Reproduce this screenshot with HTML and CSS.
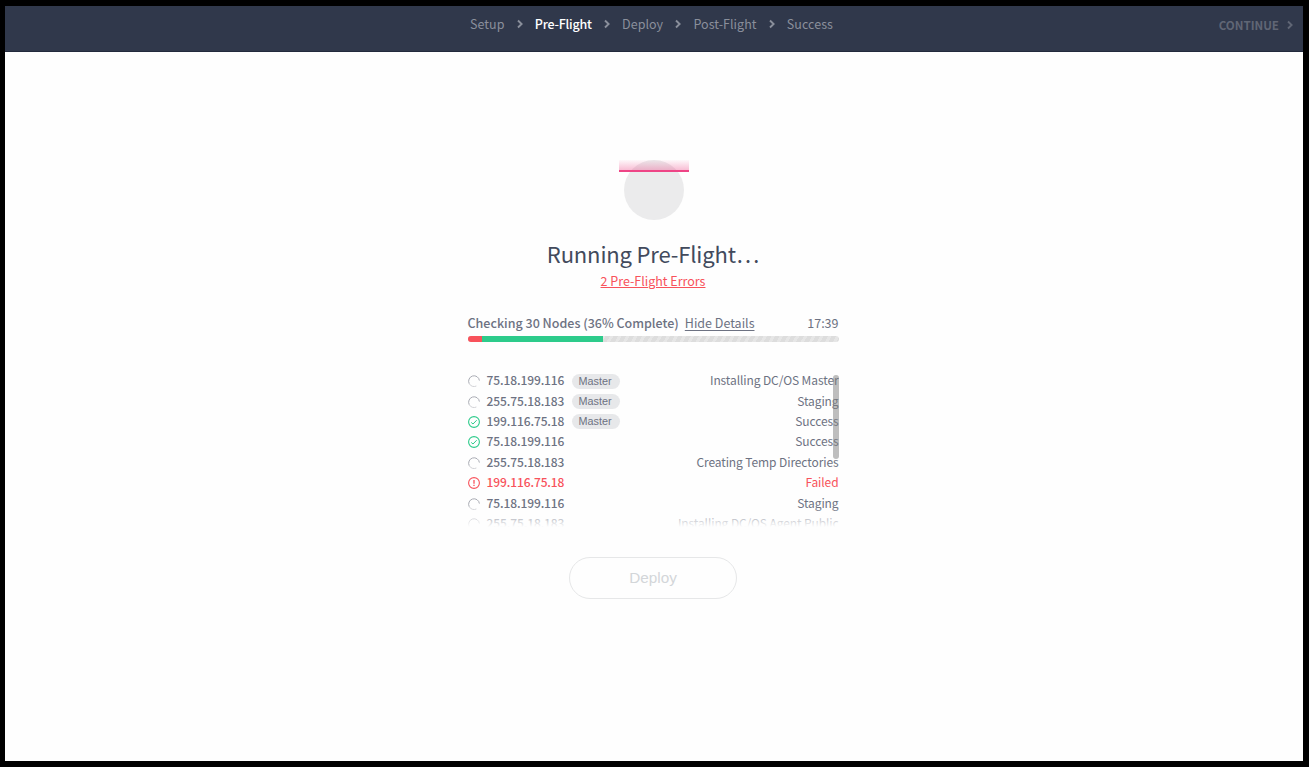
FILE: index.html
```html
<!DOCTYPE html>
<html lang="en">
<head>
<meta charset="utf-8">
<title>Pre-Flight</title>
<link rel="stylesheet" href="styles.css">
</head>
<body>
<svg class="defs" width="0" height="0" aria-hidden="true">
  <symbol id="chevron" viewBox="0 0 8 10"><path d="M2 1.5 5.6 5 2 8.5" fill="none" stroke="currentColor" stroke-width="1.9"/></symbol>
  <symbol id="spin" viewBox="0 0 12 12"><path d="M8.4 11A5.4 5.4 0 0 1 1.2 8.6" fill="none" stroke="#d0d1d5" stroke-width="1"/><path d="M1.2 8.6A5.4 5.4 0 1 1 11.4 5.6" fill="none" stroke="#a9abb3" stroke-width="1"/></symbol>
  <symbol id="ok" viewBox="0 0 12 12"><circle cx="6" cy="6" r="5.4" fill="none" stroke="#2dcb8b" stroke-width="1.1"/><path d="M3.2 6.4 5 8 8.7 4.2" fill="none" stroke="#2dcb8b" stroke-width="1"/></symbol>
  <symbol id="fail" viewBox="0 0 12 12"><circle cx="6" cy="6" r="5.4" fill="none" stroke="#f8525b" stroke-width="1.1"/><path d="M6 3v3.7M6 7.8v1.3" fill="none" stroke="#f8525b" stroke-width="1.3"/></symbol>
</svg>
<div class="app">
  <header class="topbar">
    <nav class="steps">
      <span class="step">Setup</span>
      <svg class="chev"><use href="#chevron"/></svg>
      <span class="step active">Pre-Flight</span>
      <svg class="chev"><use href="#chevron"/></svg>
      <span class="step">Deploy</span>
      <svg class="chev"><use href="#chevron"/></svg>
      <span class="step">Post-Flight</span>
      <svg class="chev"><use href="#chevron"/></svg>
      <span class="step">Success</span>
    </nav>
    <div class="continue"><span>CONTINUE</span><svg class="chev"><use href="#chevron"/></svg></div>
  </header>
  <main class="content">
    <div class="scanner"><div class="beam"></div></div>
    <h1 class="title">Running Pre-Flight…</h1>
    <a class="errors">2 Pre-Flight Errors</a>
    <section class="progress">
      <div class="summary">
        <span class="status">Checking 30 Nodes (36% Complete)</span>
        <a class="details">Hide Details</a>
        <span class="time">17:39</span>
      </div>
      <div class="bar"><div class="bar-fail"></div><div class="bar-ok"></div></div>
    </section>
    <div class="nodes">
      <div class="node"><svg class="icon"><use href="#spin"/></svg><span class="ip">75.18.199.116</span><span class="badge">Master</span><span class="state">Installing DC/OS Master</span></div>
      <div class="node"><svg class="icon"><use href="#spin"/></svg><span class="ip">255.75.18.183</span><span class="badge">Master</span><span class="state">Staging</span></div>
      <div class="node"><svg class="icon"><use href="#ok"/></svg><span class="ip">199.116.75.18</span><span class="badge">Master</span><span class="state">Success</span></div>
      <div class="node"><svg class="icon"><use href="#ok"/></svg><span class="ip">75.18.199.116</span><span class="state">Success</span></div>
      <div class="node"><svg class="icon"><use href="#spin"/></svg><span class="ip">255.75.18.183</span><span class="state">Creating Temp Directories</span></div>
      <div class="node failed"><svg class="icon"><use href="#fail"/></svg><span class="ip">199.116.75.18</span><span class="state">Failed</span></div>
      <div class="node"><svg class="icon"><use href="#spin"/></svg><span class="ip">75.18.199.116</span><span class="state">Staging</span></div>
      <div class="node"><svg class="icon"><use href="#spin"/></svg><span class="ip">255.75.18.183</span><span class="state">Installing DC/OS Agent Public</span></div>
      <div class="fade"></div>
      <div class="thumb"></div>
    </div>
    <button class="deploy">Deploy</button>
  </main>
</div>
</body>
</html>
```

FILE: styles.css
```css
* { box-sizing: border-box; }
body {
  margin: 0;
  height: 767px;
  padding: 6px 6px 6px 5px;
  background: #000;
  overflow: hidden;
  font-family: "Noto Sans CJK SC", "Noto Sans", sans-serif;
  color: #6d7282;
}
.defs { position: absolute; }
.app { height: 755px; background: #fefefe; display: flex; flex-direction: column; }
.topbar {
  height: 46px;
  flex: none;
  background: #30384b;
  border-bottom: 1px solid #222a3c;
  display: grid;
  grid-template-columns: 465px 363px 1fr;
  padding-right: 9px;
  color: #8a8f9b;
}
.steps {
  grid-column: 2;
  height: 35px;
  display: flex;
  align-items: center;
  justify-content: space-between;
  font-size: 12.5px;
  letter-spacing: 0.05px;
  white-space: nowrap;
}
.active { color: #fff; font-weight: 500; letter-spacing: -0.2px; }
.chev { width: 8px; height: 10px; flex: none; }
.continue {
  height: 37px;
  display: flex;
  align-items: center;
  justify-content: flex-end;
  gap: 7px;
  font-size: 11.6px;
  font-weight: 700;
  color: #606675;
}
.content { display: flex; flex-direction: column; align-items: center; padding-right: 2px; }
.scanner {
  width: 60px;
  height: 60px;
  margin: 108px 0 0 2px;
  border-radius: 50%;
  background: #ebebec;
  position: relative;
}
.beam {
  position: absolute;
  left: -5px;
  top: 0;
  width: 70px;
  height: 12px;
  border-bottom: 2px solid #ee4586;
  background: linear-gradient(rgba(238, 69, 134, 0.03), rgba(238, 69, 134, 0.35));
}
.title { margin: 16px 0 0; height: 34px; line-height: 34px; font-size: 22px; letter-spacing: -0.15px; font-weight: 400; color: #424a5c; white-space: nowrap; }
.errors { height: 18px; line-height: 18px; margin-top: 2px; font-size: 12.5px; color: #f8525b; text-decoration: underline; text-underline-offset: 1px; text-decoration-thickness: 1px; }
.progress { width: 371px; margin-top: 23px; }
.summary { display: flex; height: 20px; line-height: 20px; font-size: 12.5px; white-space: nowrap; }
.status { font-weight: 500; }
.details { margin-left: 6px; text-decoration: underline; text-underline-offset: 2px; text-decoration-thickness: 1px; }
.time { margin-left: auto; }
.bar {
  height: 6px;
  margin-top: 3px;
  border-radius: 3px;
  overflow: hidden;
  display: flex;
  background: repeating-linear-gradient(120deg, #dddddd 0 4px, #e6e6e6 4px 7px);
}
.bar-fail { width: 14px; background: #f8525b; }
.bar-ok { width: 121px; background: #2dcb8b; }
.nodes { width: 371px; height: 156px; margin-top: 29px; position: relative; overflow: hidden; }
.node { display: flex; align-items: center; height: 20.4px; line-height: 18px; font-size: 12px; white-space: nowrap; }
.ip, .state { padding-bottom: 2px; }
.icon { width: 12px; height: 12px; margin-right: 7px; flex: none; }
.ip { width: 78px; font-weight: 500; letter-spacing: -0.1px; }
.badge {
  width: 48px;
  height: 15px;
  margin: 0 0 0 7px;
  padding-right: 1px;
  border-radius: 8px;
  background: #e7e8ea;
  font: 10.8px/15px "Liberation Sans", sans-serif;
  text-align: center;
}
.state { margin-left: auto; letter-spacing: -0.1px; }
.failed { color: #f8525b; }
.fade {
  position: absolute;
  left: 0; right: 0; bottom: 0;
  height: 20px;
  background: linear-gradient(rgba(254, 254, 254, 0), #fefefe);
}
.thumb { position: absolute; right: 0; top: 4px; width: 6px; height: 84px; border-radius: 3px; background: rgba(125, 125, 125, 0.5); }
.deploy {
  width: 168px;
  height: 42px;
  margin-top: 30px;
  border: 1px solid #e6e7e8;
  border-radius: 21px;
  background: transparent;
  font: 15.3px "Liberation Sans", sans-serif;
  color: #d3d6d9;
}
```
